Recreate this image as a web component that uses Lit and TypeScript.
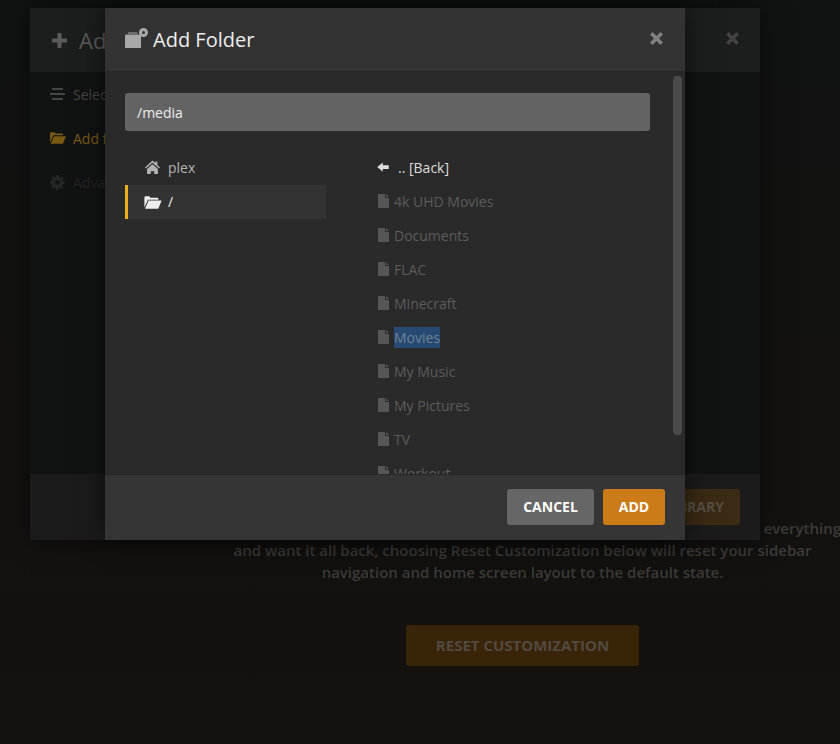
import { LitElement, html, css, svg } from "lit";
import { customElement } from "lit/decorators.js";

const ic = {
  plus: svg`<path d="M5.500 0h4v5.500H15v4H9.500V15h-4V9.500H0v-4h5.500z"/>`,
  lines: svg`<path d="M2 1h11v2H2zM0 6h15v2H0zM2 11h11v2H2z"/>`,
  gear: svg`<path fill-rule="evenodd" d="M6 0h3l.4 2.200 1.300.6L12.600 1.500l2 2-1.300 1.900.6 1.300L15.500 7v3l-2.200.4-.6 1.300 1.300 1.900-2 2-1.900-1.300-1.300.6L9 17H6l-.4-2.200-1.300-.6-1.900 1.300-2-2 1.300-1.900-.6-1.300L-1 10V7l2.200-.4.6-1.300L.5 3.500l2-2 1.900 1.300 1.300-.6zM7.500 6a2.500 2.500 0 1 0 0 5 2.500 2.500 0 0 0 0-5z"/>`,
  folderOpen: svg`<path d="M0 2.500C0 1.700.6 1.200 1.300 1.200h3.200l1.200 1.300h6.100c.7 0 1.200.5 1.200 1.200v.6H3.300L0 11.500z"/><path d="M3.900 5.200H16L12.900 12.800H.6z"/>`,
  folderAdd: svg`<path d="M0 8C0 7 .6 6.500 1.500 6.500H16V20H0z"/><path d="M3 5.500V4.500h9.500v1z"/><path fill-rule="evenodd" d="M18.500 0a4.500 4.500 0 1 0 0 9 4.500 4.500 0 0 0 0-9zm0 3a1.500 1.500 0 1 1 0 3 1.500 1.500 0 0 1 0-3z"/>`,
  home: svg`<path d="M8 .5 11 3.300V1.500h2.200v3.900L16 8l-1 1.100L8 3 1 9.100 0 8z"/><path d="M8 4.500 13.800 9.500V15H9.800v-3H6.200v3H2.200V9.500z"/>`,
  back: svg`<path d="M0 5.500 6 .5v3h6.500v4H6v3z"/>`,
  file: svg`<path d="M0 0h7v4h4v10H0zM8 0l3 3H8z"/>`,
  close: svg`<path d="M2.600 0 6.500 3.900 10.400 0 13 2.600 9.100 6.500 13 10.400 10.400 13 6.500 9.100 2.600 13 0 10.400 3.900 6.500 0 2.600z"/>`,
};

const folders = ["4k UHD Movies", "Documents", "FLAC", "Minecraft", "Movies", "My Music", "My Pictures", "TV", "Workout"];

@customElement("app-root")
export class AppRoot extends LitElement {
  static styles = css`
    :host { display: block; width: 840px; height: 744px; overflow: hidden; position: relative;
      font-family: "Open Sans", sans-serif; background: linear-gradient(180deg, #111212 0%, #131210 70%, #14110e 100%); }
    svg { fill: currentColor; display: block; flex: none; }

    .page { height: 744px; box-sizing: border-box; padding: 517px 0 0 205px; width: 840px; display: flex; flex-direction: column; align-items: center; }
    .page p { margin: 0; width: 720px; text-align: center; font-size: 15px; font-weight: 600; line-height: 22px; color: #3e3b38; white-space: nowrap; }
    .reset { margin-top: 42px; width: 233px; height: 41px; border-radius: 3px; background: #3a2408; color: #514a41; font-size: 15px; font-weight: 700; display: flex; align-items: center; justify-content: center; padding-bottom: 1px; box-sizing: border-box; }

    .modal { position: absolute; top: 8px; height: 532px; display: flex; flex-direction: column; overflow: hidden; box-shadow: 0 0 24px rgba(0,0,0,.55); }
    .under { left: 30px; width: 730px; background: #111212; }
    .over { left: 105px; width: 580px; background: #2a2a2a; }

    .u-head { height: 64px; flex: none; background: #1c1d1d; display: flex; align-items: center; padding: 0 21px 0 22px; gap: 12px; color: #5b5b5b; font-size: 22px; box-sizing: border-box; }
    .u-close { margin-left: auto; color: #424242; margin-top: -3px; }
    .u-menu { flex: 1; padding: 0 20px; display: flex; flex-direction: column; }
    .u-item { height: 44px; display: flex; align-items: center; gap: 8px; font-size: 14px; color: #454545; }
    .u-item.on { color: #7a5a12; gap: 7px; }
    .u-item.off { color: #252525; }
    .u-foot { height: 66px; flex: none; background: #1b1b1b; display: flex; align-items: center; justify-content: flex-end; padding: 0 20px 0 0; box-sizing: border-box; }
    .u-btn { width: 137px; height: 36px; border-radius: 3px; background: #3b2a14; color: #554d41; font-size: 14px; font-weight: 700; display: flex; align-items: center; justify-content: flex-end; padding: 0 16px 1px 0; box-sizing: border-box; }

    .head { height: 64px; flex: none; background: #333; border-bottom: 1px solid #272727; box-sizing: border-box; display: flex; align-items: center; padding: 0 22px 0 20px; color: #eee; font-size: 20px; gap: 5px; }
    .head .ico { color: #a8a8a8; margin-top: -3px; }
    .head .close { margin-left: auto; color: #808080; margin-top: -3px; }
    .body { height: 402px; flex: none; overflow: hidden; position: relative; padding: 21px 35px 0 20px; box-sizing: border-box; background: #2a2a2a; }
    .input { height: 38px; background: #636363; border-radius: 3px; display: flex; align-items: center; padding-left: 12px; color: #eee; font-size: 14px; }
    .cols { display: flex; margin-top: 20px; }
    .left { width: 201px; flex: none; }
    .right { margin-left: 32px; flex: 1; }
    .row { height: 34px; display: flex; align-items: center; font-size: 14px; padding-bottom: 2px; box-sizing: border-box; }
    .left .row { padding-left: 20px; gap: 8px; color: #b3b3b3; }
    .left .row svg { margin-top: 1px; }
    .left .sel { background: #333; color: #eee; border-left: 3px solid #ebaf1e; padding-left: 16px; gap: 6px; }
    .right .row { color: #5c5c5c; gap: 5px; padding-left: 20px; }
    .right .row svg { color: #565656; margin-top: -1px; }
    .right .back { color: #ddd; gap: 9px; }
    .right .back svg { color: #ddd; margin-top: 0; margin-left: -1px; }
    .mark { background: #264a73; color: #6f8192; padding: 1px 0; }
    .thumb { position: absolute; left: 568px; top: 4px; width: 9px; height: 359px; border-radius: 4px; background: #4a4a4a; }
    .foot { height: 66px; flex: none; background: #353535; border-top: 1px solid #272727; box-sizing: border-box; display: flex; align-items: center; justify-content: flex-end; gap: 9px; padding: 0 20px 2px 0; }
    .btn { height: 36px; border-radius: 3px; color: #fff; font-size: 14px; font-weight: 700; display: flex; align-items: center; justify-content: center; padding-bottom: 1px; box-sizing: border-box; }
    .cancel { width: 87px; background: #666; }
    .add { width: 62px; background: #cc7b19; }
  `;

  icon(p: unknown, w: number, h: number, vb: string) {
    return html`<svg width=${w} height=${h} viewBox=${vb}>${p}</svg>`;
  }

  render() {
    return html`
      <div class="page">
        <p>If you have customized your sidebar, and home screen layouts, and have lost everything<br />
        and want it all back, choosing Reset Customization below will reset your sidebar<br />
        navigation and home screen layout to the default state.</p>
        <div class="reset">RESET CUSTOMIZATION</div>
      </div>

      <div class="modal under">
        <div class="u-head">${this.icon(ic.plus, 15, 15, "0 0 15 15")}<span>Add Library</span>
          <span class="u-close">${this.icon(ic.close, 13, 13, "0 0 13 13")}</span></div>
        <div class="u-menu">
          <div class="u-item">${this.icon(ic.lines, 15, 14, "0 0 15 14")}<span>Select type</span></div>
          <div class="u-item on">${this.icon(ic.folderOpen, 16, 14, "0 0 16 14")}<span>Add folders</span></div>
          <div class="u-item off">${this.icon(ic.gear, 15, 15, "-1 0 17 17")}<span>Advanced</span></div>
        </div>
        <div class="u-foot"><div class="u-btn">ADD LIBRARY</div></div>
      </div>

      <div class="modal over">
        <div class="head"><span class="ico">${this.icon(ic.folderAdd, 23, 20, "0 0 23 20")}</span><span>Add Folder</span>
          <span class="close">${this.icon(ic.close, 13, 13, "0 0 13 13")}</span></div>
        <div class="body">
          <div class="input">/media</div>
          <div class="cols">
            <div class="left">
              <div class="row">${this.icon(ic.home, 15, 15, "0 0 16 16")}<span>plex</span></div>
              <div class="row sel">${this.icon(ic.folderOpen, 18, 14, "0 0 16 13")}<span>/</span></div>
            </div>
            <div class="right">
              <div class="row back">${this.icon(ic.back, 12, 11, "0 0 12.500 12")}<span>.. [Back]</span></div>
              ${folders.map((f) => html`<div class="row">
                ${this.icon(ic.file, 11, 14, "0 0 11 14")}
                <span class=${f === "Movies" ? "mark" : ""}>${f}</span></div>`)}
            </div>
          </div>
          <div class="thumb"></div>
        </div>
        <div class="foot"><div class="btn cancel">CANCEL</div><div class="btn add">ADD</div></div>
      </div>
    `;
  }
}
